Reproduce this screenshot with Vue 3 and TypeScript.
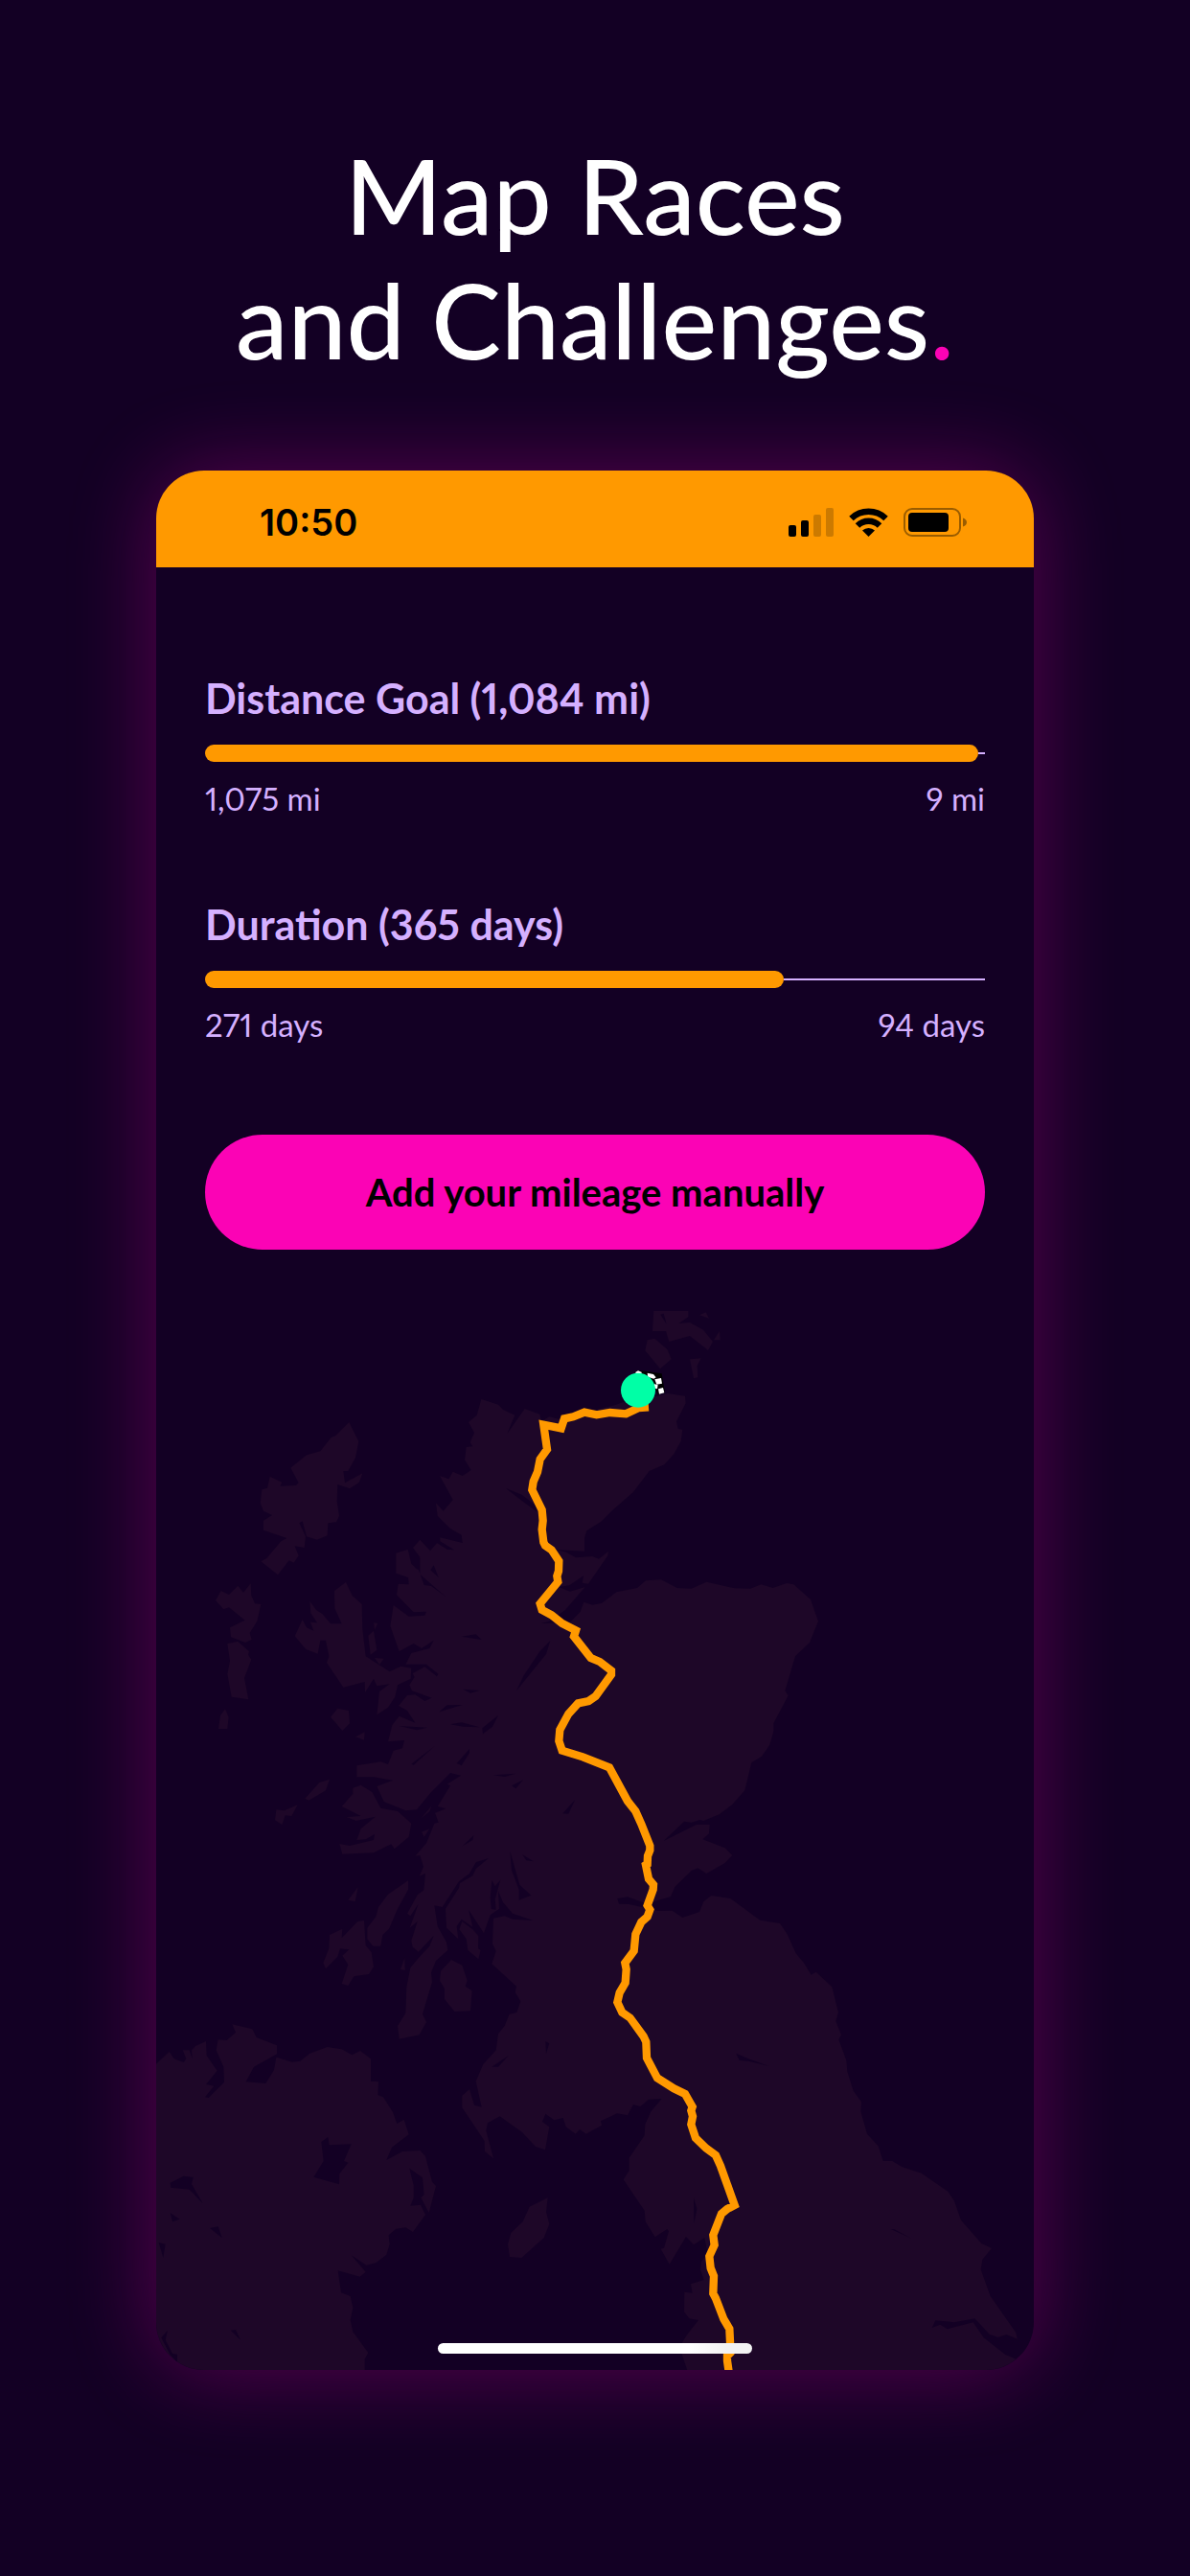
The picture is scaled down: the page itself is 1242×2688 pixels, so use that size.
<script setup lang="ts">
interface Goal {
  title: string
  total: number
  done: number
  unit: string
}

const goals: Goal[] = [
  { title: 'Distance Goal', total: 1084, done: 1075, unit: 'mi' },
  { title: 'Duration', total: 365, done: 271, unit: 'days' },
]

const fmt = (n: number): string => n.toLocaleString('en-US')
const percent = (g: Goal): string => `${(g.done / g.total) * 100}%`

// The coastline is stored as map sheets, each with its own origin.
type Sheet = { dx: number; dy: number; sx: number }
const nw: Sheet = { dx: 0, dy: 0, sx: 1 }
const ne: Sheet = { dx: 1140, dy: 0, sx: 1 }
const west: Sheet = { dx: 0, dy: 1350, sx: 1 }
const east: Sheet = { dx: 1140, dy: 1350, sx: 1 }
const sw: Sheet = { dx: -60, dy: 2190, sx: 1 }
const se: Sheet = { dx: 1320, dy: 2190, sx: 1.014 }

const place = (s: Sheet, points: string): string =>
  points
    .split(' ')
    .map((pair) => {
      const [x, y] = pair.split(',').map(Number)
      return `${Math.round(x * s.sx + s.dx)},${y + s.dy}`
    })
    .join(' ')

const mainland: string = [
  place(nw, '1027,330 1080,347 1095,363 1132,380 1108,438 1163,360 1210,377 1215,400 1240,385 1280,395'),
  place(ne, '210,371 300,350 330,340 400,330 470,312 525,320 527,343 498,400 503,423 517,425 512,462 490,502 460,535 413,555 362,622 295,680 262,713 217,742 210,765 210,806 118,801 150,808 183,826 235,822 255,830 285,806 283,820 222,908 203,905 207,883 163,913 130,918 165,932 212,918 150,990 100,1025 75,1032 165,1028 197,995 208,965 235,974 265,968 310,934 375,921 402,898 450,895 500,921 545,923 592,902 680,922 730,923 763,910 800,921 843,906 865,910 918,957 942,1025 915,1092 870,1135 838,1243 848,1258 802,1345 802,1370'),
  place(east, '790,62 765,98 733,118 712,205 672,250 632,280 583,300 572,297 545,305 522,302 458,363 560,312 602,312 600,340 580,358 650,385 673,408 650,432 592,465 565,448 545,456 493,507 480,537 430,552 400,558 345,538 313,543 318,560 350,561 400,572 440,582 485,581 517,603 570,585 583,553 607,534 667,543 760,611 822,621 845,655 872,715 897,745 920,782 935,773 985,820 1005,900 997,927 1014,970 1006,985 1030,1050 1033,1085 1052,1145 1077,1180'),
  place(se, '883,370 902,440 937,478 952,525 980,525 1010,543 1070,563 1152,620 1172,650 1192,710 1255,783 1287,798 1258,833 1253,865 1283,948 1362,1062 1366,1082 1332,1068 1307,1077 1280,1067 1235,1018 1172,1030 1113,1024 1103,1047 1128,1037 1150,1051 1230,1030 1262,1078 1328,1130 1362,1145 1370,1180 347,1180 330,1130 330,1095 345,1070 382,1023 353,1018 337,997 338,935 363,938 358,910 398,897 388,865 390,840 410,815 400,765 367,787 343,762 292,848 265,800 275,797 290,745 285,738 248,763 218,715 215,680 150,583 168,555 168,515 215,445 217,410 235,370 268,330 228,332 202,354 180,348 163,382 130,376 80,400 83,413 35,440 15,426'),
  place(west, '1322,1280 1292,1258 1283,1230 1255,1237 1228,1217 1218,1242 1240,1258 1227,1330 1197,1320 1155,1275 1085,1225 1047,1246 1042,1270 1065,1357 1038,1335 1037,1302 967,1198 967,1160 990,1140 1005,1190 1028,1196 1010,1115 1033,1062 1073,1018 1080,967 1100,942 1115,905 1138,900 1150,865 1133,837 1137,818 1060,748 1073,708 1062,685 1065,605 1100,598 1125,608 1190,612 1125,590 1095,555 1080,520 1083,575 1055,595 1035,652 987,578 1000,632 965,608 950,630 955,670 918,635 915,575 957,510 960,495 1000,472 1010,450 1050,417 1010,430 990,465 957,490 905,570 880,565 890,630 918,680 922,705 885,738 870,775 873,805 843,905 855,930 833,970 770,983 765,942 790,902 793,820 805,760 830,730 865,692 878,660 830,710 812,695 808,675 827,615 803,635 830,560 805,598 795,590 827,532 847,517 852,465 833,473 846,443 835,408 820,410 855,370 880,308 893,305 882,275 916,262 890,255 930,190 920,185 963,158 930,150 870,210 825,265 790,268 722,240 700,192 750,173 690,163 637,163 637,127 712,115 735,123 752,80 780,73 786,48 735,52'),
  place(nw, '748,1350 770,1322 820,1343 795,1305 768,1290 795,1257 820,1255 850,1275 872,1265 810,1243 802,1225 818,1200 812,1188 850,1168 888,1198 892,1190 855,1160 790,1160 808,1125 865,1110 878,1085 840,1110 815,1095 770,1120 742,1040 752,975 800,1010 850,1007 855,995 815,997 762,943 767,908 800,910 798,888 760,875 760,812 797,800 808,845 825,862 830,863 848,912 870,915 915,948 835,878 835,825 813,795 835,770 867,805 888,780 920,800 942,802 898,775 898,763 968,780 965,755 930,735 890,695 885,655 908,680 938,645 897,570 925,580 938,557 968,570 995,552 975,520 980,480 1000,478 992,465 1005,435 987,402 1013,380'),
].join(' ')

const ireland: string = [
  place(west, '0,1070 50,1022 65,1045 95,1056 103,1045 92,1018 113,1018 122,1045 120,1018 132,1005 165,990 167,1035 200,1082 165,1125 190,1130 162,1165 173,1167 222,1118 220,1070 197,1018 203,985 230,987 258,962 247,937 310,952 323,978 387,1003 387,1030 315,1070 290,1117 352,1122 378,1080 385,1040 435,1055 460,1052 490,1028 545,1008 590,1015 622,1033 648,1020 681,1045 681,1115 705,1117 703,1158 720,1165 750,1212 763,1248 785,1235 800,1282 747,1322 730,1362 780,1335 835,1332'),
  place(sw, '912,510 933,590 945,603 923,687 898,640 908,630 903,577 862,548 875,600 875,640 865,665 897,662 912,693 873,747 850,733 820,737 797,757 800,785 790,818 758,843 727,851 680,820 725,872 707,887 638,868 648,937 677,948 685,985 677,1022 685,1060 733,1125 722,1145 722,1180 60,1180'),
].join(' ')

const land: string[] = [
  mainland,
  ireland,
  // Skye, Raasay and the Small Isles
  place(nw, '603,903 623,945 653,972 655,1050 665,1135 740,1183 775,1166 808,1172 806,1205 765,1225 757,1262 735,1295 700,1318 708,1245 740,1222 700,1228 690,1205 663,1248 662,1215 595,1232 543,1155 550,1135 540,1085 523,1085 515,1127 478,1113 443,1072 467,1020 480,1045 502,1055 492,1028 513,1030 493,1000 490,962 510,990 530,1003 555,1033 590,1033 568,985 567,930'),
  place(nw, '690,1030 703,1032 693,1052'),
  place(nw, '673,1070 690,1055 700,1115 680,1130'),
  place(nw, '693,1140 722,1142 708,1162'),
  place(nw, '577,1298 612,1305 615,1345 592,1368 555,1325'),
  place(nw, '633,1387 662,1372 660,1397'),
  // Outer Hebrides
  place(nw, '613,402 643,463 633,513 610,555 595,555 600,592 655,562 645,590 615,610 577,597 575,650 582,695 573,715 547,718 545,757 513,770 480,760 467,712 457,718 477,760 473,795 443,790 455,820 440,842 425,835 390,880 337,838 355,828 400,775 418,765 345,740 345,710 372,693 345,680 335,655 340,613 357,608 365,572 403,590 397,602 447,600 455,592 430,545 480,505 523,493 557,450 570,445'),
  place(nw, '305,907 307,945 318,970 337,972 325,1025 302,1062 308,1083 288,1092 243,1075 240,1045 287,1022 237,982 220,988 195,960 212,930 237,942 265,914 282,935'),
  place(nw, '232,1095 265,1088 300,1120 297,1130 307,1145 285,1203 298,1270 245,1262 232,1190 240,1150'),
  place(nw, '225,1300 236,1325 232,1362 204,1362 210,1320'),
  // Mull, Coll, Tiree and Lismore
  place(west, '552,170 540,205 487,236 475,230 520,180'),
  place(west, '452,250 433,285 413,283 403,312 381,298 385,265 410,268'),
  place(west, '650,188 685,210 712,260 765,270 808,308 800,350 755,388 745,373 690,400 592,404 583,372 615,378 690,360 693,342 665,358 637,360 650,325 695,287 635,300 605,288 650,285 590,255 625,215 625,197'),
  place(west, '872,252 865,270 838,293'),
  place(west, '840,335 865,325 848,350'),
  // Colonsay, Jura, Islay, Gigha, Bute and Arran
  place(west, '641,507 632,553 610,548'),
  place(west, '798,487 798,515 765,575 738,638 718,657 712,692 688,692 670,670 670,635 697,600 705,570 735,530'),
  place(west, '640,615 660,612 665,690 683,712 690,757 675,780 628,787 610,816 590,810 610,750 592,722 613,703 585,700 577,725 540,763 532,745 550,700 552,657 592,638 590,667'),
  place(west, '787,728 788,768 774,765'),
  place(west, '958,640 967,615 1000,640 1018,660 1017,700 1025,705 1018,733 985,705 980,670'),
  place(west, '933,735 967,752 983,800 977,818 998,832 993,895 943,897 912,858 912,825 897,800 900,770'),
  // Orkney
  place(ne, '427,50 535,50 535,73 505,93 540,90 582,113 612,150 597,177 540,132 475,150 465,117 423,117'),
  place(ne, '407,145 430,140 470,175 482,205 447,235 400,178'),
  place(ne, '570,67 590,58 600,77'),
  place(ne, '633,117 635,145 615,145'),
  place(ne, '540,205 575,202 563,225 565,262 552,265'),
  // Isle of Man
  place(sw, '1295,640 1290,685 1300,722 1283,765 1213,828 1176,825 1170,785 1180,750 1217,715 1238,668'),
]

const lochs: string[] = [
  place(ne, '448,65 458,62 467,95'),
  place(nw, '965,1073 1010,1066 1028,1083'),
  place(nw, '1243,1086 1230,1128 1137,1243 1160,1195 1210,1120'),
  place(nw, '1103,608 1155,630 1200,665 1200,682 1150,645'),
  place(nw, '970,1238 1022,1242 993,1250'),
  place(nw, '895,1309 920,1288 968,1287'),
  place(nw, '930,1348 965,1342 1022,1357 970,1355'),
  place(nw, '770,1353 858,1358 825,1366'),
  place(nw, '1080,1320 1062,1355 1032,1378 1030,1360'),
  place(nw, '878,850 893,888 868,865'),
  place(west, '880,67 815,125 808,122'),
  place(west, '990,75 990,87 965,127 950,120'),
  place(west, '1065,157 1135,152 1100,162'),
  place(west, '1158,172 1135,199 1122,190'),
  place(west, '1320,235 1300,278 1282,277'),
  place(west, '1003,346 1000,360 968,379'),
  place(west, '1117,395 1147,500 1183,533 1145,548 1145,515 1122,455'),
  place(west, '1155,405 1190,427 1168,424'),
  place(west, '1060,485 1070,505 1087,485 1070,545 1073,578 1058,576 1055,540'),
  place(west, '1228,990 1240,997 1230,1028'),
  place(west, '1112,1035 1080,1070 1060,1070'),
  place(east, '685,1028 720,1043 787,1068 725,1052 695,1050'),
  place(se, '367,640 377,675 368,720'),
  place(se, '975,738 985,738 1040,768'),
  place(sw, '607,450 611,475 680,472 657,525 670,530 643,565 642,598 562,575 593,525 586,465'),
  place(sw, '113,593 155,572 185,576 180,597 215,658 173,614 115,608'),
  place(sw, '113,688 143,707 120,715'),
  place(sw, '237,735 263,730 275,765'),
  place(sw, '77,780 98,785 91,828'),
  place(sw, '302,1055 318,1053 333,1085'),
  place(sw, '105,1055 98,1085 120,1128 135,1130 135,1155 112,1130 85,1078'),
]

const route: string = [
  place(ne, '411,355 380,357 340,376 290,372 248,379 210,371 175,385 147,391 137,421 82,410 93,487 71,518 63,558 50,588 46,614 77,677 80,710 77,738 82,778 87,788 107,802 130,837 129,868 124,884 127,902 71,970 77,990 107,1006 140,1032 183,1054 177,1073 230,1140 258,1152 294,1180 294,1192 245,1260 223,1275 190,1282 160,1315 133,1365 130,1400 140,1430'),
  place(east, '205,100 288,133 345,238 370,270 388,310 415,378 415,392 408,410 407,435 402,438 411,482 426,500 425,515 407,565 415,578 407,600 388,617 370,655 365,707 337,745 341,765 338,807 320,838 313,868 328,900 353,917 395,975 403,992 405,1042 438,1105 490,1138'),
  place(se, '340,315 363,355 359,367 364,385 359,410 373,453 405,485 435,507 450,540 493,663 470,675 453,690 427,757 431,788 415,823 419,860 429,885 427,940 435,955 460,1020 477,1050 479,1090 480,1125 470,1135 470,1150 475,1185'),
].join(' ')
</script>

<template>
  <main class="page">
    <h1 class="headline">Map Races<br />and Challenges<span class="dot">.</span></h1>

    <section class="phone">
      <header class="status">
        <time class="clock">10:50</time>
        <div class="indicators">
          <svg width="47" height="30" viewBox="0 0 47 30" aria-label="Signal">
            <rect x="0" y="18" width="8" height="12" rx="2" />
            <rect x="13" y="13" width="8" height="17" rx="2" />
            <rect x="26" y="7" width="8" height="23" rx="2" opacity=".2" />
            <rect x="39" y="0" width="8" height="30" rx="2" opacity=".2" />
          </svg>
          <svg width="41" height="30" viewBox="0 0 41 30" aria-label="Wi-Fi">
            <g fill="none" stroke="#000" stroke-width="6.500">
              <path d="M2.500 11A26 26 0 0 1 38.500 11" />
              <path d="M9 18.500A16.500 16.500 0 0 1 32 18.500" />
            </g>
            <path d="M20.500 30L14 23.500A9.500 9.500 0 0 1 27 23.500Z" />
          </svg>
          <svg width="67" height="30" viewBox="0 0 67 30" aria-label="Battery">
            <rect x="1" y="1" width="58" height="28" rx="8" fill="none" stroke="#000" stroke-width="2" opacity=".4" />
            <rect x="5" y="5" width="42" height="20" rx="4" />
            <path d="M62 10.500Q66 12 66 15T62 19.500Z" opacity=".4" />
          </svg>
        </div>
      </header>

      <div class="content">
        <article v-for="goal in goals" :key="goal.title" class="goal">
          <h2 class="goal-title">{{ goal.title }} ({{ fmt(goal.total) }} {{ goal.unit }})</h2>
          <div
            class="track"
            role="progressbar"
            :aria-label="goal.title"
            :aria-valuenow="goal.done"
            aria-valuemin="0"
            :aria-valuemax="goal.total"
          >
            <div class="fill" :style="{ width: percent(goal) }"></div>
            <div class="rest"></div>
          </div>
          <div class="figures">
            <span>{{ fmt(goal.done) }} {{ goal.unit }}</span>
            <span>{{ fmt(goal.total - goal.done) }} {{ goal.unit }}</span>
          </div>
        </article>

        <button type="button" class="add">Add your mileage manually</button>
      </div>

      <svg class="map" viewBox="9 54 2748 3315" role="img" aria-label="Route map">
        <polygon v-for="(p, i) in land" :key="'land' + i" :points="p" class="land" />
        <polygon v-for="(p, i) in lochs" :key="'loch' + i" :points="p" class="water" />
        <polyline :points="route" class="route" />
        <g transform="translate(1140 0)">
          <path d="M365 246L378 240L405 243L452 250L462 310L440 316L420 270Z" fill="#000" />
          <path
            d="M368 247L378 241L390 246L384 254ZM407 248L426 252L434 262L427 266L408 260ZM430 268L450 264L453 281L436 284ZM428 282L440 286L438 298L430 296ZM441 298L456 294L460 310L444 314Z"
            fill="#fff"
          />
          <circle cx="378" cy="302" r="54" fill="#00ffa6" />
        </g>
      </svg>

      <div class="home-bar"></div>
    </section>
  </main>
</template>

<style>
body {
  margin: 0;
  background: #130024;
}
</style>

<style scoped>
.page {
  box-sizing: border-box;
  min-height: 100vh;
  padding: 138px 163px 215px;
  background: #130024;
  font-family: Lato, 'Open Sans', sans-serif;
  font-variant-numeric: proportional-nums;
}

.headline {
  margin: 0 -100px 93px;
  color: #fff;
  font-size: 109px;
  font-weight: 500;
  line-height: 130px;
  text-align: center;
}

.dot {
  color: #fb03b5;
}

.phone {
  position: relative;
  overflow: hidden;
  border-radius: 50px;
  background: #130024;
  box-shadow: 0 0 90px rgba(252, 3, 183, 0.3);
}

.status {
  display: flex;
  align-items: center;
  justify-content: space-between;
  box-sizing: border-box;
  height: 101px;
  padding: 6px 69px 0 108px;
  background: #ff9900;
}

.clock {
  color: #000;
  font-family: Inter, 'Liberation Sans', sans-serif;
  font-size: 38px;
  font-weight: 600;
  line-height: 46px;
}

.indicators {
  display: flex;
  gap: 16px;
}

.content {
  display: flex;
  flex-direction: column;
  padding: 107px 51px 64px;
}

.goal {
  margin-bottom: 80px;
  color: #d5b0ff;
}

.goal-title {
  margin: 0 0 18px;
  font-size: 43px;
  font-weight: 700;
  line-height: 60px;
}

.track {
  display: flex;
  align-items: center;
  height: 18px;
}

.fill {
  height: 18px;
  border-radius: 9px;
  background: #ff9900;
}

.rest {
  flex: 1;
  height: 2px;
  background: #d5b0ff;
}

.figures {
  display: flex;
  justify-content: space-between;
  margin-top: 16px;
  font-size: 33px;
  line-height: 44px;
}

.add {
  height: 120px;
  margin-top: 13px;
  border: 0;
  border-radius: 60px;
  background: #fb03b5;
  color: #000;
  font-family: inherit;
  font-size: 40px;
  font-weight: 700;
}

.map {
  display: block;
  width: 100%;
  height: auto;
}

.land {
  fill: #1e0728;
}

.water {
  fill: #130024;
}

.route {
  fill: none;
  stroke: #ff9900;
  stroke-width: 25;
}

.home-bar {
  position: absolute;
  bottom: 17px;
  left: 50%;
  width: 328px;
  height: 11px;
  border-radius: 6px;
  margin-left: -164px;
  background: linear-gradient(90deg, #fff 80%, #f2f2f2 92%);
}
</style>
